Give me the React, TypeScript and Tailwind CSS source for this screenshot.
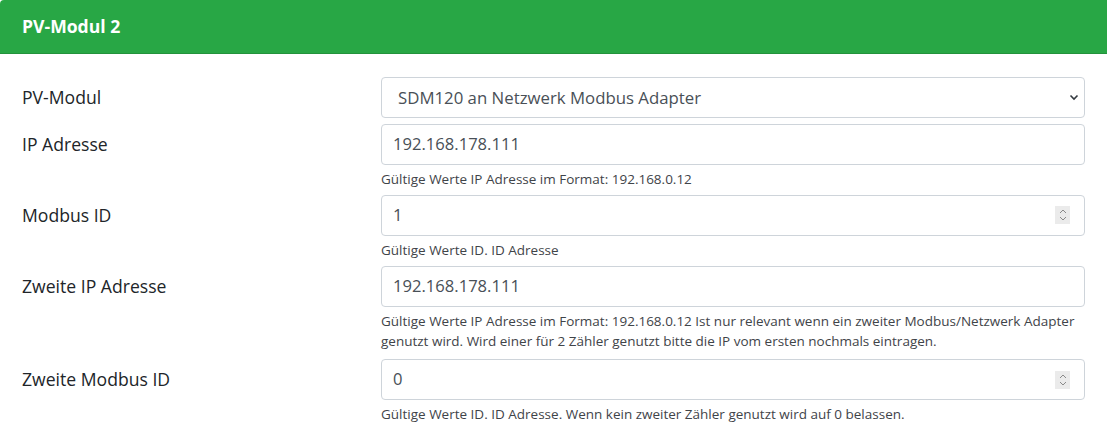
import React from "react";

function Spinner() {
  return (
    <div className="w-[15px] h-[18px] bg-[#ebebeb] flex flex-col items-center justify-center gap-[2px] mr-[-1px]">
      <svg width="8" height="5" viewBox="0 0 8 5"><path d="M1 4 L4 1 L7 4" fill="none" stroke="#8a8a8a" strokeWidth="1" /></svg>
      <svg width="8" height="5" viewBox="0 0 8 5"><path d="M1 1 L4 4 L7 1" fill="none" stroke="#8a8a8a" strokeWidth="1" /></svg>
    </div>
  );
}

function Field({ kind, value }: { kind: "select" | "text" | "number"; value: string }) {
  return (
    <div
      className={
        "h-[41px] border border-[#ced4da] rounded-[4px] bg-white flex items-center justify-between text-[#495057] " +
        (kind === "select" ? "pr-[5px]" : "pr-[15px]")
      }
    >
      <span className={kind === "select" ? "pl-[16px] text-[16.8px]" : "pl-[11px] text-[16.6px]"}>{value}</span>
      {kind === "select" && (
        <svg width="10" height="7" viewBox="0 0 10 7">
          <path d="M1.5 1.5 L5 5 L8.5 1.5" fill="none" stroke="#343a40" strokeWidth="1.6" />
        </svg>
      )}
      {kind === "number" && <Spinner />}
    </div>
  );
}

function Row({
  label,
  kind,
  value,
  help,
  extra,
}: {
  label: string;
  kind: "select" | "text" | "number";
  value: string;
  help?: string;
  extra?: boolean;
}) {
  return (
    <div className={"grid grid-cols-[359px_1fr] " + (extra ? "mb-[7.5px]" : "mb-[5.5px]")}>
      <div className="h-[41px] flex items-center text-[#212529]">{label}</div>
      <div>
        <Field kind={kind} value={value} />
        {help && <div className="mt-[4px] text-[13.5px] leading-[20.5px] text-[#3f4449]">{help}</div>}
      </div>
    </div>
  );
}

export default function App() {
  return (
    <div className="w-full bg-white text-[17.6px]" style={{ fontFamily: '"Open Sans", "Noto Sans", sans-serif' }}>
      <div className="rounded-tl-[4px] overflow-hidden">
        <div className="h-[54px] bg-[#28a745] border-b border-[#23923c] px-[22px] flex items-center text-white font-bold">
          PV-Modul 2
        </div>
        <div className="pt-[23px] px-[22px]">
          <Row label="PV-Modul" kind="select" value="SDM120 an Netzwerk Modbus Adapter" />
          <Row label="IP Adresse" kind="text" value="192.168.178.111" help="Gültige Werte IP Adresse im Format: 192.168.0.12" />
          <Row label="Modbus ID" kind="number" value="1" help="Gültige Werte ID. ID Adresse" />
          <Row
            label="Zweite IP Adresse"
            kind="text"
            value="192.168.178.111"
            extra
            help="Gültige Werte IP Adresse im Format: 192.168.0.12 Ist nur relevant wenn ein zweiter Modbus/Netzwerk Adapter genutzt wird. Wird einer für 2 Zähler genutzt bitte die IP vom ersten nochmals eintragen."
          />
          <Row
            label="Zweite Modbus ID"
            kind="number"
            value="0"
            help="Gültige Werte ID. ID Adresse. Wenn kein zweiter Zähler genutzt wird auf 0 belassen."
          />
        </div>
      </div>
    </div>
  );
}
